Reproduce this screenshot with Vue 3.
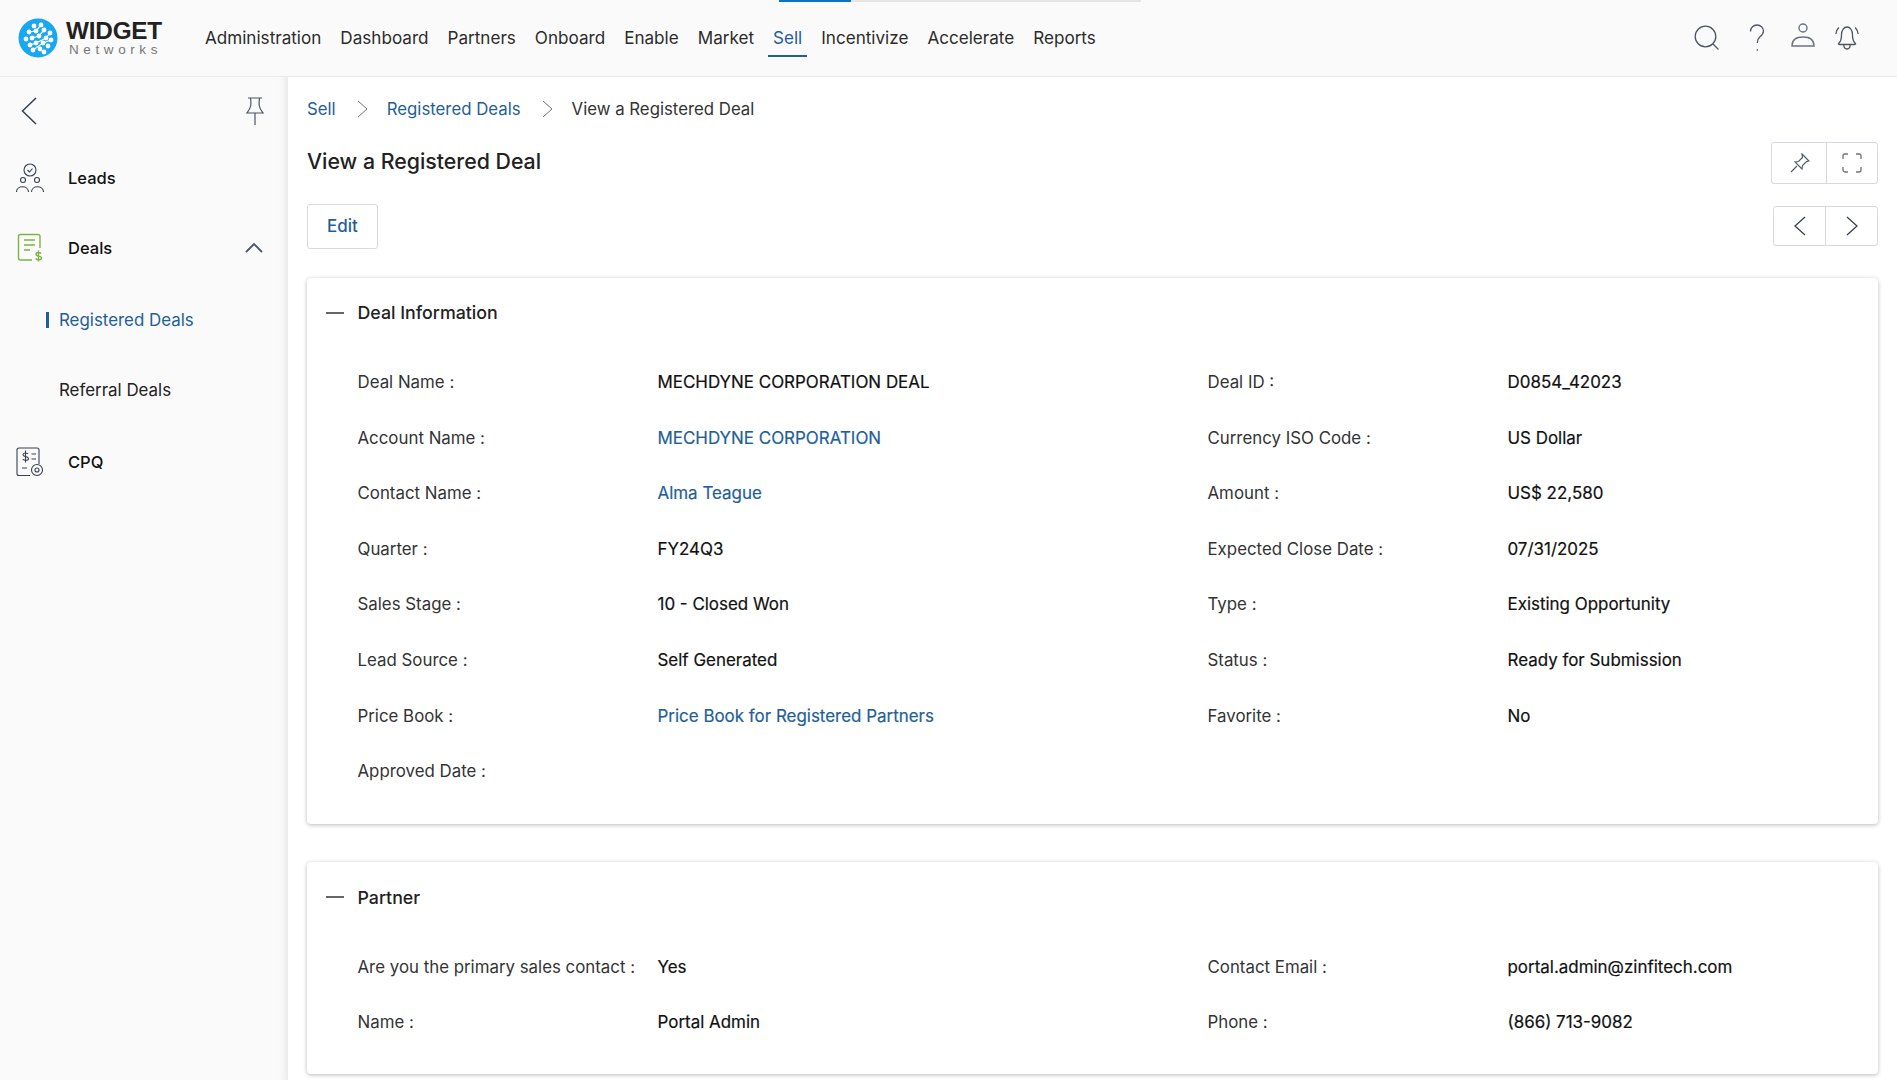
<script setup>
const navItems = ['Administration','Dashboard','Partners','Onboard','Enable','Market','Sell','Incentivize','Accelerate','Reports']
const dealRows = [
  [['Deal Name :','MECHDYNE CORPORATION DEAL'],['Deal ID :','D0854_42023']],
  [['Account Name :','MECHDYNE CORPORATION',true],['Currency ISO Code :','US Dollar']],
  [['Contact Name :','Alma Teague',true],['Amount :','US$ 22,580']],
  [['Quarter :','FY24Q3'],['Expected Close Date :','07/31/2025']],
  [['Sales Stage :','10 - Closed Won'],['Type :','Existing Opportunity']],
  [['Lead Source :','Self Generated'],['Status :','Ready for Submission']],
  [['Price Book :','Price Book for Registered Partners',true],['Favorite :','No']],
  [['Approved Date :','']]
]
const partnerRows = [
  [['Are you the primary sales contact :','Yes'],['Contact Email :','portal.admin@zinfitech.com']],
  [['Name :','Portal Admin'],['Phone :','(866) 713-9082']]
]
const sections = [
  { title: 'Deal Information', rows: dealRows, cls: 'deal' },
  { title: 'Partner', rows: partnerRows, cls: 'partner' }
]
const logoDots = [[16,8],[23,7],[11,14],[18,13],[26,12],[32,15],[8,21],[14,20],[21,18],[28,20],[33,22],[12,27],[18,25],[25,25],[30,28],[15,32],[22,31],[26,34]]
</script>

<template>
  <div class="app">
    <div class="progress"><div class="progress-fill"></div></div>
    <header class="topbar">
      <div class="logo">
        <svg class="logo-mark" width="40" height="40" viewBox="0 0 40 40">
          <circle cx="20" cy="20" r="19.5" fill="#18a8f1"/>
          <circle v-for="(d,i) in logoDots" :key="i" :cx="d[0]" :cy="d[1]" r="2.4" fill="#fff"/>
          <path d="M11 14 18 13 23 7M14 20 21 18 26 12M12 27 18 25 28 20 32 15M15 32 25 25 33 22" stroke="#fff" stroke-width="1.2" fill="none"/>
        </svg>
        <div class="logo-text">
          <div class="logo-main">WIDGET</div>
          <div class="logo-sub">Networks</div>
        </div>
      </div>
      <nav class="nav">
        <a v-for="n in navItems" :key="n" class="nav-item" :class="{ active: n === 'Sell' }">{{ n }}</a>
      </nav>
      <div class="top-icons">
        <svg class="ti-search" width="26" height="26" viewBox="0 0 26 26" fill="none" stroke="#4b5563" stroke-width="1.3"><circle cx="11.500" cy="11.500" r="10.300"/><path d="M19 19l5.500 5.500"/></svg>
        <svg class="ti-help" width="16" height="28" viewBox="0 0 16 28" fill="none" stroke="#4b5563" stroke-width="1.3"><path d="M1.500 7.500C1.500 3.500 4.500 1 8 1s6.500 2.500 6.500 6c0 3-2 4.500-3.800 6C9 14.500 8.300 16 8.300 19"/><path d="M8.300 25v2" stroke-width="1"/></svg>
        <svg class="ti-user" width="24" height="25" viewBox="0 0 24 25" fill="none" stroke="#6b7280" stroke-width="1.4"><circle cx="12" cy="5" r="4"/><path d="M1 23c0-6 4.500-9 11-9s11 3 11 9z"/></svg>
        <svg class="ti-bell" width="24" height="26" viewBox="0 0 24 26" fill="none" stroke="#4b5563" stroke-width="1.3"><path d="M4 18c2-2 2.500-4 2.500-8C6.500 5 9 2 12 2s5.500 3 5.500 8c0 4 .5 6 2.500 8 1 1 .8 1.500-.5 1.500h-15C3.200 19.500 3 19 4 18z"/><path d="M8.800 19.500c0 6 6.400 6 6.400 0M3.800 2.500C2 4.500 1 6.500.8 9M20.200 2.500C22 4.500 23 6.500 23.200 9"/></svg>
      </div>
    </header>

    <div class="body">
      <aside class="sidebar">
        <div class="side-top">
          <svg width="16" height="28" viewBox="0 0 16 28" fill="none" stroke="#374151" stroke-width="1.500"><path d="M15 1 1.500 14 15 27"/></svg>
          <svg width="18" height="29" viewBox="0 0 18 29" fill="none" stroke="#4b5563" stroke-width="1.200"><path d="M2 1h14M4.500 1c.5 5 1.500 9-3.500 15h16c-5-6-4-10-3.500-15M9 16v12"/></svg>
        </div>
        <div class="side-item leads">
          <svg width="28" height="30" viewBox="0 0 28 30" fill="none" stroke="#374151" stroke-width="1.100"><circle cx="14" cy="7" r="6"/><path d="M11.500 7l2 2 3-3.500"/><circle cx="7" cy="17" r="2.500"/><circle cx="21" cy="17" r="2.500"/><path d="M.5 29c0-7 12-7 12 0M15.500 29c0-7 12-7 12 0"/></svg>
          <span>Leads</span>
        </div>
        <div class="side-item deals">
          <svg width="26" height="30" viewBox="0 0 26 30" fill="none" stroke="#7cb342" stroke-width="1.400"><path d="M23 15V3.500A2 2 0 0 0 21 1.500H3.500a2 2 0 0 0-2 2V25a2 2 0 0 0 2 2H15"/><path d="M7 7h11M7 12h11M7 17h6"/><path d="M24 20.500c-1-1.500-5-1.500-5 .7 0 2.500 5.500 1.300 5.500 3.800 0 2.300-4.500 2.300-5.800.5M21.500 17.500v11"/></svg>
          <span>Deals</span>
          <svg class="chev" width="18" height="11" viewBox="0 0 18 11" fill="none" stroke="#4b5563" stroke-width="1.800"><path d="M1 10 9 2l8 8"/></svg>
        </div>
        <div class="sub-item active">Registered Deals</div>
        <div class="sub-item">Referral Deals</div>
        <div class="side-item cpq">
          <svg width="28" height="30" viewBox="0 0 28 30" fill="none" stroke="#374151" stroke-width="1.100"><path d="M14 28.500H3a2 2 0 0 1-2-2V3a2 2 0 0 1 2-2h18a2 2 0 0 1 2 2v14"/><path d="M12 7c-1-1.500-5-1.500-5 .7 0 2.500 5.500 1.300 5.500 3.800 0 2.300-4.500 2.300-5.800.5M9.500 3.500v12M15.500 7H20M15.500 12H20M6 21h5"/><circle cx="21" cy="23" r="5.500"/><circle cx="21" cy="23" r="2"/></svg>
          <span>CPQ</span>
        </div>
      </aside>

      <main class="main">
        <div class="crumbs">
          <a class="link">Sell</a>
          <svg width="11" height="18" viewBox="0 0 11 18" fill="none" stroke="#6b7280" stroke-width="1"><path d="M1 1l9 8-9 8"/></svg>
          <a class="link">Registered Deals</a>
          <svg width="11" height="18" viewBox="0 0 11 18" fill="none" stroke="#6b7280" stroke-width="1"><path d="M1 1l9 8-9 8"/></svg>
          <span>View a Registered Deal</span>
        </div>
        <div class="title-row">
          <h1>View a Registered Deal</h1>
          <div class="btn-group tall">
            <button class="pin-btn">
              <svg width="20" height="20" viewBox="0 0 20 20" fill="none" stroke="#4b5563" stroke-width="1.100"><path d="M12 1l7 7-2.500.5-4 4-.5 3.500L5 9l3.500-.5 4-4z"/><path d="M7 13 1 19"/></svg>
            </button>
            <button>
              <svg width="20" height="20" viewBox="0 0 20 20" fill="none" stroke="#6b7280" stroke-width="1.300"><path d="M1 6V3a2 2 0 0 1 2-2h3M14 1h3a2 2 0 0 1 2 2v3M19 14v3a2 2 0 0 1-2 2h-3M6 19H3a2 2 0 0 1-2-2v-3"/></svg>
            </button>
          </div>
        </div>
        <div class="action-row">
          <button class="edit">Edit</button>
          <div class="btn-group nav-group">
            <button><svg width="12" height="20" viewBox="0 0 12 20" fill="none" stroke="#374151" stroke-width="1.300"><path d="M11 1 1 10l10 9"/></svg></button>
            <button><svg width="12" height="20" viewBox="0 0 12 20" fill="none" stroke="#374151" stroke-width="1.300"><path d="M1 1l10 9-10 9"/></svg></button>
          </div>
        </div>

        <section v-for="s in sections" :key="s.title" class="card" :class="s.cls">
          <div class="card-head">
            <i class="minus"></i>
            <h2>{{ s.title }}</h2>
          </div>
          <div class="fields">
            <div v-for="(r,ri) in s.rows" :key="ri" class="row">
              <div v-for="(f,fi) in r" :key="fi" class="field">
                <span class="label">{{ f[0] }}</span>
                <span class="value" :class="{ link: f[2] }">{{ f[1] }}</span>
              </div>
            </div>
          </div>
        </section>
      </main>
    </div>
  </div>
</template>

<style>
html, body { margin: 0; background: #fff; }
</style>

<style scoped>
* { box-sizing: border-box; }
.app { position: relative; width: 1897px; height: 1080px; overflow: hidden; background: #fff; font-family: Inter, "Noto Sans", sans-serif; font-size: 16.850px; color: #222; }
.progress { position: absolute; left: 779px; top: 0; width: 362px; height: 2px; background: #e5e5e5; }
.progress-fill { width: 72px; height: 2px; background: #0b72c6; }
.topbar { height: 77px; background: #fafafa; border-bottom: 1px solid #e8eaef; display: flex; align-items: center; }
.logo { display: flex; align-items: center; width: 205px; padding-left: 18px; gap: 8px; flex: none; }
.logo-mark { flex: none; }
.logo-main { font-family: "Liberation Sans", sans-serif; font-weight: 700; font-size: 24.300px; line-height: 23px; color: #222; letter-spacing: -.2px; }
.logo-sub { font-family: "Liberation Sans", sans-serif; font-size: 13.500px; line-height: 15px; color: #777; letter-spacing: 4.600px; padding-left: 3px; white-space: nowrap; width: 96px; }
.nav { display: flex; gap: 19px; align-items: center; height: 100%; font-size: 17.100px; }
.nav-item { position: relative; color: #2b2b2b; line-height: 24px; }
.nav-item.active { color: #1f5f99; }
.nav-item.active::after { content: ""; position: absolute; left: -5px; right: -5px; top: 29px; height: 2px; background: #1f5f99; }
.top-icons { margin-left: auto; display: flex; align-items: center; padding-right: 38px; }
.ti-search { margin-right: 29px; }
.ti-help { margin-right: 26px; }
.ti-user { margin-right: 20px; margin-top: -6px; }
.body { display: flex; height: 1003px; }
.sidebar { width: 288px; flex: none; background: #fafafa; box-shadow: inset -9px 0 8px -7px rgba(0,0,0,.09); position: relative; }
.side-top { display: flex; justify-content: space-between; padding: 20px 24px 0 21px; height: 66px; align-items: flex-start; }
.side-item { display: flex; align-items: center; height: 70px; padding-left: 16px; font-weight: 500; color: #111; font-size: 16.500px; position: relative; }
.side-item svg { flex: none; }
.side-item span { position: absolute; left: 68px; }
.side-item.deals { padding-left: 17px; height: 70px; margin-bottom: 2px; }
.side-item .chev { position: absolute; left: 245px; top: 29px; }
.sub-item { height: 70px; display: flex; align-items: center; padding-left: 59px; color: #222; position: relative; font-size: 16.900px; }
.sub-item.active { color: #1f5f99; }
.sub-item.active::before { content: ""; position: absolute; left: 46px; top: 27px; width: 3px; height: 16px; background: #1f5f99; }
.side-item.cpq { height: 72px; margin-top: 1px; }
.main { flex: 1; min-width: 0; padding: 20px 19px 0 19px; }
.crumbs { display: flex; align-items: center; height: 24px; margin-bottom: 0; color: #333; font-size: 16.800px; }
.crumbs svg { margin: 0 19px 0 21px; }
.link { color: #1f5f99; }
.title-row { display: flex; justify-content: space-between; align-items: flex-start; margin-top: 21px; height: 63px; }
h1 { margin: 3.500px 0 0; font-size: 21.300px; font-weight: 500; color: #222; line-height: 30px; }
.btn-group { display: flex; border: 1px solid #d5d9e0; border-radius: 3px; background: #fff; height: 40px; width: 105px; }
.btn-group.tall { width: 107px; height: 42px; }
.btn-group.nav-group { margin-top: 2px; }
.btn-group button { flex: 1; border: 0; background: none; padding: 0; display: flex; align-items: center; justify-content: center; }
.btn-group button.pin-btn { padding-left: 3px; }
.btn-group button + button { border-left: 1px solid #d5d9e0; }
.action-row { display: flex; justify-content: space-between; align-items: flex-start; height: 74px; margin-top: -1px; }
.edit { width: 71px; height: 45px; border: 1px solid #d5d9e0; border-radius: 3px; background: #fff; color: #1f5f99; font: 500 17px Inter, sans-serif; padding: 0 0 2px; }
.card { background: #fff; border-radius: 4px; box-shadow: 0 1px 4px rgba(0,0,0,.28); padding: 0 0 0 50.500px; position: relative; }
.card.deal { height: 546px; margin-bottom: 38px; }
.card.partner { height: 212px; }
.card-head { height: 69px; display: flex; align-items: center; }
.minus { position: absolute; left: 19px; top: 34px; width: 18px; height: 2px; background: #666; }
h2 { margin: 0; font-size: 17.800px; font-weight: 500; color: #222; }
.partner .card-head { height: 71px; }
.fields { padding-top: 7.200px; }
.partner .fields { padding-top: 5.800px; }
.row { display: flex; height: 55.600px; align-items: center; }
.field { display: flex; width: 850px; flex: none; align-items: center; }
.label { width: 300px; flex: none; color: #333; }
.value { font-size: 16.950px; color: #111; -webkit-text-stroke: .2px currentColor; }
.value.link { color: #1f5f99; }
</style>
